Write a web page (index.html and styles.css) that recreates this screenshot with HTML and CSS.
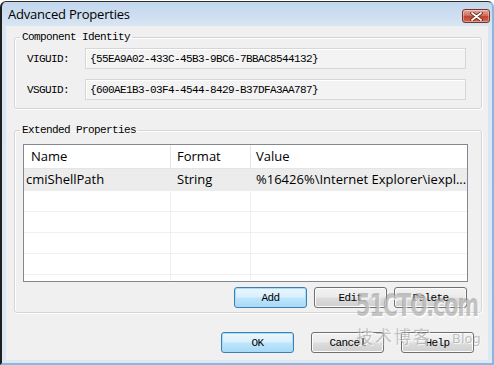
FILE: index.html
```html
<!DOCTYPE html>
<html lang="en">
<head>
    <meta charset="UTF-8">
    <title>Advanced Properties</title>
    <link rel="stylesheet" href="styles.css">
</head>
<body>
    <div class="window">
        <div class="titlebar">
            <span class="title">Advanced Properties</span>
            <button class="close" aria-label="Close">
                <svg width="13" height="9" viewBox="0 0 13 9">
                    <path d="M2 1 L11 8 M11 1 L2 8" stroke="#5a1c14" stroke-width="3.4" stroke-linecap="round"/>
                    <path d="M2 1 L11 8 M11 1 L2 8" stroke="#ffffff" stroke-width="1.8" stroke-linecap="round"/>
                </svg>
            </button>
        </div>

        <div class="client">
            <fieldset class="group">
                <legend>Component Identity</legend>
                <div class="group-body identity">
                    <div class="field">
                        <span class="field-label">VIGUID:</span>
                        <div class="textbox">{55EA9A02-433C-45B3-9BC6-7BBAC8544132}</div>
                    </div>
                    <div class="field">
                        <span class="field-label">VSGUID:</span>
                        <div class="textbox">{600AE1B3-03F4-4544-8429-B37DFA3AA787}</div>
                    </div>
                </div>
            </fieldset>

            <fieldset class="group extended">
                <legend>Extended Properties</legend>
                <div class="group-body props">
                    <div class="listview">
                        <div class="lv-row lv-head">
                            <div class="col col-name">Name</div>
                            <div class="col col-format">Format</div>
                            <div class="col col-value">Value</div>
                        </div>
                        <div class="lv-row lv-item selected">
                            <div class="col col-name">cmiShellPath</div>
                            <div class="col col-format">String</div>
                            <div class="col col-value">%16426%\Internet Explorer\iexpl...</div>
                        </div>
                        <div class="lv-row lv-item"><div class="col col-name"></div><div class="col col-format"></div><div class="col col-value"></div></div>
                        <div class="lv-row lv-item"><div class="col col-name"></div><div class="col col-format"></div><div class="col col-value"></div></div>
                        <div class="lv-row lv-item"><div class="col col-name"></div><div class="col col-format"></div><div class="col col-value"></div></div>
                        <div class="lv-row lv-item"><div class="col col-name"></div><div class="col col-format"></div><div class="col col-value"></div></div>
                        <div class="lv-row lv-item last"><div class="col col-name"></div><div class="col col-format"></div><div class="col col-value"></div></div>
                    </div>
                    <div class="btn-row list-btns">
                        <button class="btn default">Add</button>
                        <button class="btn">Edit</button>
                        <button class="btn">Delete</button>
                    </div>
                </div>
            </fieldset>

            <div class="btn-row dialog-btns">
                <button class="btn default">OK</button>
                <button class="btn">Cancel</button>
                <button class="btn">Help</button>
            </div>
        </div>

        <!-- blog watermark stamped over the screenshot -->
        <div class="watermark">
            <div class="wm-site">51CTO.com</div>
            <div class="wm-sub"><span class="wm-cn">技术博客</span><span class="wm-blog">Blog</span></div>
        </div>
    </div>
</body>
</html>
```

FILE: styles.css
```css
body {
    margin: 0;
    background-color: #ffffff;
    font-family: "Open Sans", "Noto Sans", sans-serif;
}
.window {
    position: relative;
    box-sizing: border-box;
    margin-top: 1px;
    width: 494px;
    height: 364px;
    border-top: 1px solid #2c2c2c;
    border-left: 2px solid #1f1f1f;
    border-right: 2px solid #8db6dc;
    border-bottom: 2px solid #8db6dc;
    border-radius: 6px 6px 0 0;
    padding: 0 4px 3px 4px;
    background: linear-gradient(#c2d6ec, #d8e5f3 24px, #dce8f4);
    overflow: hidden;
}
.titlebar {
    display: flex;
    justify-content: space-between;
    align-items: flex-start;
    height: 24px;
}
.title {
    padding: 3px 0 0 2px;
    font-size: 13px;
    line-height: 18px;
    letter-spacing: -0.2px;
    color: #000000;
}
.close {
    display: flex;
    align-items: center;
    justify-content: center;
    width: 28px;
    height: 14px;
    margin: 7px -2px 0 0;
    padding: 0;
    border: 1px solid #7a3328;
    border-radius: 3px;
    background: linear-gradient(#e6a89c, #d0705f 45%, #c0432f 55%, #cc6a55);
    box-shadow: inset 0 0 0 1px rgba(255, 255, 255, 0.35);
}
.client {
    height: 334px;
    background-color: #f0f0f0;
    overflow: hidden;
}

/* group boxes */
.group {
    margin: 5px 6px 0 8px;
    padding: 0;
    border: 1px solid #d5d5d5;
    border-radius: 3px;
    box-shadow: inset 1px 1px 0 #ffffff, 1px 1px 0 #ffffff;
}
.group legend {
    margin-left: 5px;
    padding: 0 2px;
}
.group legend, .field-label, .textbox, .btn {
    font-family: "Liberation Mono", "DejaVu Sans Mono", monospace;
    font-size: 11px;
    letter-spacing: -0.6px;
    line-height: 12px;
    color: #000000;
}
.extended {
    margin-top: 15px;
}
.identity {
    padding: 5px 15px 8px 12px;
}
.field {
    display: flex;
    align-items: center;
}
.field + .field {
    margin-top: 10px;
}
.field-label {
    width: 58px;
    flex-shrink: 0;
}
.textbox {
    flex: 1;
    box-sizing: border-box;
    height: 21px;
    padding: 4px 4px 0;
    border: 1px solid #d6d6d6;
    background-color: #f3f3f3;
    box-shadow: inset 1px 1px 0 #ffffff;
    white-space: nowrap;
}

/* list view */
.props {
    padding: 8px 13px 4px 8px;
}
.listview {
    height: 138px;
    box-sizing: border-box;
    border: 1px solid #828790;
    background-color: #ffffff;
    overflow: hidden;
}
.lv-row {
    display: flex;
    box-sizing: border-box;
    font-size: 13px;
    color: #000000;
}
.col {
    box-sizing: border-box;
    white-space: nowrap;
    overflow: hidden;
}
.col-name {
    width: 147px;
}
.col-format {
    width: 80px;
}
.col-value {
    flex: 1;
}
.lv-head {
    height: 24px;
    border-bottom: 1px solid #e5e5e5;
    line-height: 22px;
}
.lv-head .col-name, .lv-head .col-format {
    border-right: 1px solid #e5e5e5;
}
.lv-head .col-name {
    padding-left: 7px;
}
.lv-head .col-format {
    padding-left: 6px;
}
.lv-head .col-value {
    padding-left: 5px;
}
.lv-item {
    height: 21px;
    line-height: 20px;
    border-bottom: 1px solid #f0f0f0;
}
.lv-item .col-name, .lv-item .col-format {
    border-right: 1px solid #f0f0f0;
}
.lv-item.selected {
    height: 22px;
    background-color: #ececec;
    border-bottom-color: #ececec;
}
.lv-item.selected .col {
    border-right-color: #ececec;
}
.lv-item .col-name {
    padding-left: 2px;
}
.lv-item .col-format {
    padding-left: 6px;
}
.lv-item .col-value {
    padding-left: 5px;
}

/* buttons */
.btn-row {
    display: flex;
    justify-content: flex-end;
}
.list-btns {
    gap: 7px;
    margin: 5px 1px 0 0;
}
.dialog-btns {
    gap: 17px;
    margin-top: 19px;
    padding-right: 14px;
}
.btn {
    width: 73px;
    height: 21px;
    padding: 0;
    border: 1px solid #707070;
    border-radius: 3px;
    background: linear-gradient(#f2f2f2, #ebebeb 48%, #dddddd 52%, #cfcfcf);
    box-shadow: inset 0 0 0 1px #fcfcfc;
}
.btn.default {
    border-color: #3c7fb1;
    background: linear-gradient(#eaf6fd, #d9f0fc 48%, #bee6fd 52%, #a7d9f5);
    box-shadow: inset 0 0 0 1px #a9dcf6;
}

/* watermark */
.watermark {
    position: absolute;
    left: 354px;
    top: 285px;
    width: 132px;
    pointer-events: none;
    color: rgba(140, 140, 140, 0.5);
    text-shadow: 1px 1px 0 rgba(255, 255, 255, 0.7);
}
.wm-site {
    display: inline-block;
    height: 38px;
    font-family: "DejaVu Sans Condensed", "DejaVu Sans", sans-serif;
    font-stretch: condensed;
    font-weight: bold;
    font-size: 23px;
    line-height: 26px;
    letter-spacing: -1px;
    white-space: nowrap;
    transform: scaleY(1.4);
    transform-origin: left top;
}
.wm-sub {
    display: flex;
    align-items: baseline;
    gap: 20px;
}
.wm-cn {
    font-family: "Noto Sans CJK SC", sans-serif;
    font-size: 17px;
    line-height: 22px;
    letter-spacing: 2px;
}
.wm-blog {
    font-family: "DejaVu Sans", sans-serif;
    font-size: 13px;
}
```
